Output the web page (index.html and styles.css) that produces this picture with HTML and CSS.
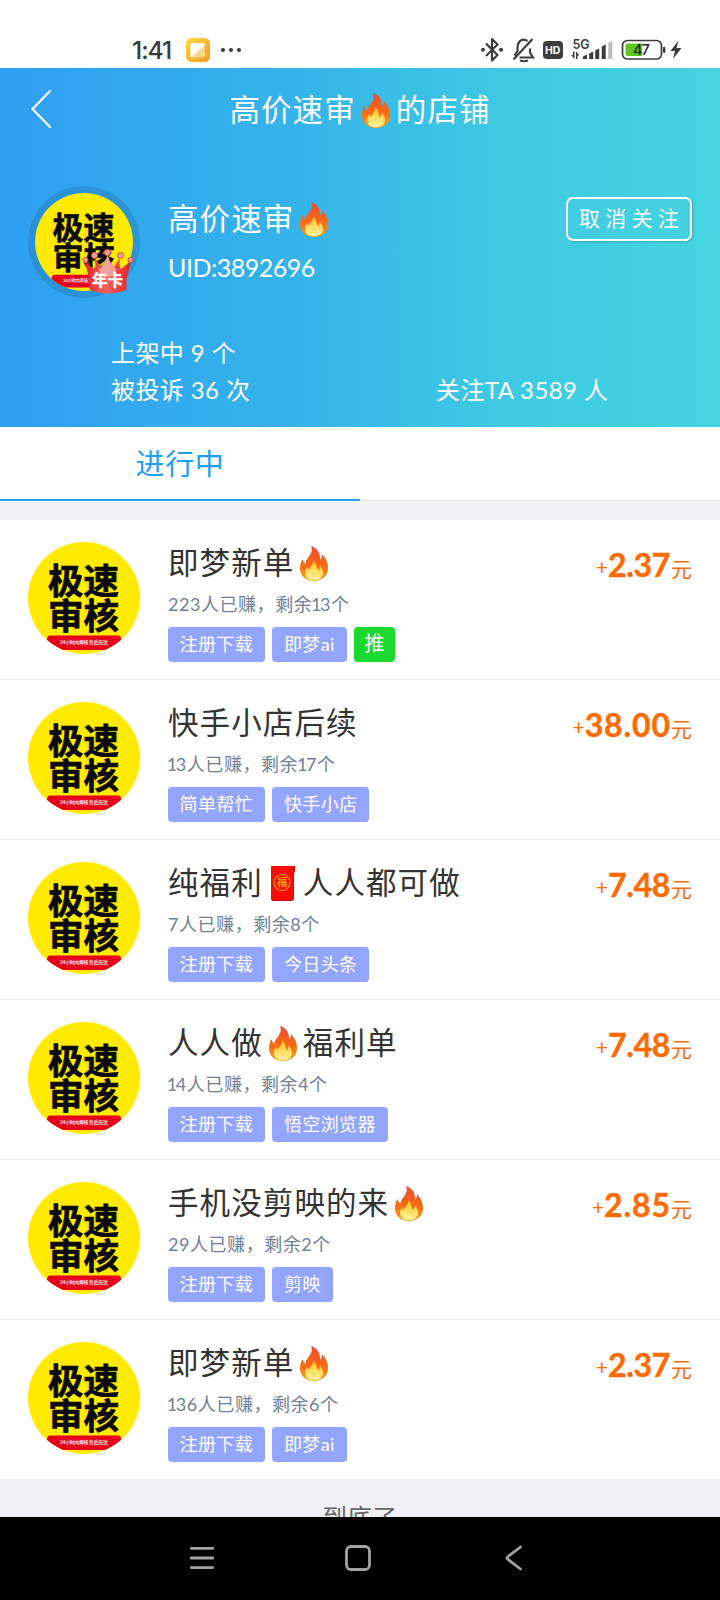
FILE: index.html
```html
<!DOCTYPE html>
<html lang="zh-CN">
<head>
<meta charset="utf-8">
<title>店铺</title>
<link rel="stylesheet" href="styles.css">
</head>
<body>
<svg class="defs" width="0" height="0">
  <defs>
    <linearGradient id="flame" x1="0" y1="0" x2="0" y2="1">
      <stop offset="0" stop-color="#ea4a30"/><stop offset=".55" stop-color="#fb6a14"/><stop offset="1" stop-color="#ffa012"/>
    </linearGradient>
    <linearGradient id="core" x1="0" y1="0" x2="0" y2="1">
      <stop offset="0" stop-color="#ffc41e"/><stop offset="1" stop-color="#fff3a0"/>
    </linearGradient>
    <linearGradient id="note" x1="0" y1="0" x2="1" y2="1">
      <stop offset="0" stop-color="#fbd83c"/><stop offset="1" stop-color="#fa9a25"/>
    </linearGradient>
    <linearGradient id="crown" x1="0" y1="0" x2="1" y2="0">
      <stop offset="0" stop-color="#e02028"/><stop offset=".45" stop-color="#f0665f"/><stop offset="1" stop-color="#e3202a"/>
    </linearGradient>
    <clipPath id="round"><circle cx="56" cy="56" r="56"/></clipPath>
    <symbol id="fire" viewBox="0 0 28 35">
      <path fill="url(#flame)" d="M11 0C17 2 20.500 6.500 20 13.500C21.500 12.500 22.300 10.500 22 8C25.800 12 28 17 28 22C28 30 22 35 14 35C6 35 0 30 0 22.500C0 19 .800 15.500 2.500 13C3 15.500 4 17 5.500 18C5 12 14.500 8.500 11 0Z"/>
      <path fill="url(#core)" d="M13 14.500C17 17 15.500 20.500 18 24C19.300 23 19.800 21.500 19.500 19.500C22 22 23 24.500 23 27C23 31.500 19.500 34.300 14 34.300C8.500 34.300 5 31.500 5 27C5 24.500 6 22.700 7.500 21.200C7.800 22.500 8.300 23.500 9.300 24C9 20.500 14 19 13 14.500Z"/>
    </symbol>
    <symbol id="avatar" viewBox="0 0 112 112">
      <g clip-path="url(#round)">
        <rect width="112" height="112" fill="#ffea00"/>
        <g class="logo-text">
          <text x="20" y="52">极速</text>
          <text x="20" y="87">审核</text>
        </g>
        <path fill="#e6001c" d="M19 108V97q0-3.500 3.500-3.500H89.500q3.500 0 3.500 3.500V108Z"/>
        <text class="logo-note" x="32" y="102" textLength="48">24小时内审核 售后无忧</text>
      </g>
    </symbol>
  </defs>
</svg>

<div class="status">
  <span class="clock">1:41</span>
  <svg class="app" width="24" height="24" viewBox="0 0 24 24">
    <rect width="24" height="24" rx="5.500" fill="url(#note)"/>
    <rect x="4.500" y="5" width="14.500" height="14.500" rx="1.500" fill="#fff" opacity=".45"/>
    <path fill="#fff" d="M6 5h11.500q1.500 0 1.500 1.500L5.500 19.500Q4.500 19.500 4.500 18V6.500Q4.500 5 6 5Z"/>
  </svg>
  <svg class="dots" width="22" height="6" viewBox="0 0 22 6" fill="#3a3a3a"><circle cx="3" cy="3" r="2"/><circle cx="11" cy="3" r="2"/><circle cx="19" cy="3" r="2"/></svg>
  <svg class="signals" width="206" height="28" viewBox="0 0 206 28" fill="none" stroke="#3c3c3c">
    <path stroke-width="2.200" stroke-linejoin="round" d="M6 7.500L17.500 19L12 24.500V3L17.500 8.500L6 20"/>
    <g fill="#3c3c3c" stroke="none"><circle cx="3" cy="13.700" r="2"/><circle cx="21" cy="13.700" r="2"/></g>
    <path stroke-width="2.200" d="M39.500 21.500H53L50 16.500V12.500M47.500 5Q43 2 39.500 5.500Q37.500 8 37.500 12V15L34.500 19.500M33.500 23.500L52.500 3"/>
    <path stroke-width="2.200" d="M40 24.500Q44 26 48 24.500"/>
    <rect x="63" y="5" width="20" height="18" rx="4" fill="#3c3c3c" stroke="none"/>
    <g stroke="none" class="glyphs">
      <text x="65" y="17.500" class="hd">HD</text>
      <text x="92.500" y="12.500" class="net" textLength="17">5G</text>
    </g>
    <g fill="#3c3c3c" stroke="none">
      <path d="M91 19h2v-3.500h1.500V23ZM96 23V15.500L99.500 19.500h-2v3.500Z"/>
      <path d="M103 23V20.500L107 18.500V23ZM109.200 17.500l4-2v7.500h-4ZM115.200 14.500l4-2v10.500h-4ZM121.700 10.500l4-2v14.500h-4Z"/>
      <path fill="#bdbdbd" d="M128.300 6.500l4-1.500v18h-4Z"/>
    </g>
    <rect x="142.500" y="4.500" width="39" height="18.500" rx="5" stroke-width="1.700"/>
    <path d="M148 7.500h14V20h-14q-2.500 0-2.500-2.500v-7.500q0-2.500 2.500-2.500Z" fill="#5cc81c" stroke="none"/>
    <text x="153" y="19.300" class="battery">47</text>
    <path stroke-width="2.400" stroke-linecap="round" d="M184.200 12v3.800"/>
    <path fill="#3c3c3c" stroke="none" d="M198.500 4.500L190.500 15H195L193 23L201.500 12H196.500Z"/>
  </svg>
</div>

<header class="hero">
  <div class="bar">
    <svg class="back" width="22" height="40" viewBox="0 0 22 40"><path d="M20 2L2.500 20L20 38"/></svg>
    <h1 class="title light">高价速审<svg class="fire"><use href="#fire"/></svg>的店铺</h1>
  </div>
  <div class="profile">
    <div class="portrait">
      <svg width="98" height="98"><use href="#avatar"/></svg>
      <svg class="crown" width="52" height="48" viewBox="0 0 52 48">
        <path fill="url(#crown)" d="M3 12L12 20Q15 16 12.500 8L19 18Q24 12 25.500 5Q27 12 32 18L38.500 8Q36 16 39 20L49 12L44.500 30V41Q26 48 8 41L7 30Z"/>
        <path fill="#f7cfcb" opacity=".6" d="M25.500 7Q27 14 34 20L33 26Q26 30 18 26L17 20Q24 14 25.500 7Z"/>
        <g fill="#ef9b97" stroke="#d93b40" stroke-width=".800"><circle cx="3.500" cy="11" r="2.600"/><circle cx="12.500" cy="6.500" r="3"/><circle cx="25.500" cy="3.500" r="3.200"/><circle cx="38.500" cy="6.500" r="3"/><circle cx="48.500" cy="11" r="2.600"/></g>
        <text x="10" y="36.500" class="crown-text">年卡</text>
      </svg>
    </div>
    <div class="who">
      <div class="title light">高价速审<svg class="fire"><use href="#fire"/></svg></div>
      <div class="uid">UID:3892696</div>
    </div>
    <button class="follow">取消关注</button>
  </div>
  <div class="stats">
    <div class="left">上架中 9 个<br>被投诉 36 次</div>
    <div class="right">关注TA 3589 人</div>
  </div>
</header>

<nav class="tabs"><div class="tab active">进行中</div><div class="tab"></div></nav>

<main class="list">
  <article class="row">
    <svg class="pic"><use href="#avatar"/></svg>
    <div class="info">
      <h2 class="title">即梦新单<svg class="fire"><use href="#fire"/></svg></h2>
      <p class="sub">223人已赚，剩余<i>1</i>3个</p>
      <div class="tags"><span class="tag">注册下载</span><span class="tag">即梦ai</span><span class="tag push">推</span></div>
    </div>
    <div class="price"><i>+</i><b>2.37</b>元</div>
  </article>
  <article class="row">
    <svg class="pic"><use href="#avatar"/></svg>
    <div class="info">
      <h2 class="title">快手小店后续</h2>
      <p class="sub"><i>1</i>3人已赚，剩余<i>1</i>7个</p>
      <div class="tags"><span class="tag">简单帮忙</span><span class="tag">快手小店</span></div>
    </div>
    <div class="price"><i>+</i><b class="wide">38.00</b>元</div>
  </article>
  <article class="row">
    <svg class="pic"><use href="#avatar"/></svg>
    <div class="info">
      <h2 class="title">纯福利<svg class="packet" width="24" height="35" viewBox="0 0 24 35"><path fill="#b50d0d" d="M2 0H24V5L23 8V33L21 35H1Z"/><path fill="#fb0a05" d="M0 0H22.500V34H0Z"/><circle cx="11" cy="16.500" r="8" fill="none" stroke="#ff9d00" stroke-width="1.200"/><text x="5.700" y="20.300" class="luck">福</text></svg>人人都可做</h2>
      <p class="sub">7人已赚，剩余8个</p>
      <div class="tags"><span class="tag">注册下载</span><span class="tag">今日头条</span></div>
    </div>
    <div class="price"><i>+</i><b>7.48</b>元</div>
  </article>
  <article class="row">
    <svg class="pic"><use href="#avatar"/></svg>
    <div class="info">
      <h2 class="title">人人做<svg class="fire"><use href="#fire"/></svg>福利单</h2>
      <p class="sub"><i>1</i>4人已赚，剩余4个</p>
      <div class="tags"><span class="tag">注册下载</span><span class="tag">悟空浏览器</span></div>
    </div>
    <div class="price"><i>+</i><b>7.48</b>元</div>
  </article>
  <article class="row">
    <svg class="pic"><use href="#avatar"/></svg>
    <div class="info">
      <h2 class="title">手机没剪映的来<svg class="fire"><use href="#fire"/></svg></h2>
      <p class="sub">29人已赚，剩余2个</p>
      <div class="tags"><span class="tag">注册下载</span><span class="tag">剪映</span></div>
    </div>
    <div class="price"><i>+</i><b class="wide">2.85</b>元</div>
  </article>
  <article class="row">
    <svg class="pic"><use href="#avatar"/></svg>
    <div class="info">
      <h2 class="title">即梦新单<svg class="fire"><use href="#fire"/></svg></h2>
      <p class="sub"><i>1</i>36人已赚，剩余6个</p>
      <div class="tags"><span class="tag">注册下载</span><span class="tag">即梦ai</span></div>
    </div>
    <div class="price"><i>+</i><b>2.37</b>元</div>
  </article>
</main>
<div class="end">到底了</div>

<footer class="keys">
  <svg width="24" height="28" viewBox="0 0 24 28"><path d="M1.300 3.300H22.700M1.300 13H22.700M1.300 22.700H22.700"/></svg>
  <svg class="home" width="26" height="28" viewBox="0 0 26 28"><rect x="1.500" y="1.500" width="23" height="23" rx="4.500"/></svg>
  <svg width="18" height="28" viewBox="0 0 18 28"><path d="M15.500 2L2.500 12Q1.500 13 2.500 14L15.500 24"/></svg>
</footer>
</body>
</html>
```

FILE: styles.css
```css
* { box-sizing: border-box; }
body {
  margin: 0;
  width: 720px;
  height: 1600px;
  overflow: hidden;
  display: flex;
  flex-direction: column;
  background: #efeff4;
  font-family: Lato, "Noto Sans CJK SC", sans-serif;
}
h1, h2, p { margin: 0; font-weight: 400; }
.defs { position: absolute; }

/* status bar */
.status {
  flex: none;
  height: 68px;
  padding: 32px 0 0 132px;
  display: flex;
  align-items: center;
  background: #fff;
}
.status svg { flex: none; }
.clock { width: 54px; font: 500 24.5px/28px Inter, sans-serif; letter-spacing: -1px; color: #3a3a3a; }
.dots { margin-left: 10px; }
.signals { margin-left: 238px; }
.glyphs { font-family: Inter, sans-serif; font-weight: 700; }
.hd { font-size: 10.5px; fill: #fff; }
.net { font-size: 12.5px; font-weight: 600; fill: #3c3c3c; }
.battery { font: 500 14.5px Inter, sans-serif; letter-spacing: -1px; fill: #222; stroke: none; }

/* shop header */
.hero {
  flex: none;
  height: 359px;
  background: linear-gradient(90deg, #2f9ff1, #35b3e9 40%, #3fcae2 72%, #45d4e0);
  color: #fff;
}
.bar { height: 82px; display: grid; grid-template-columns: 60px 1fr 60px; align-items: center; }
.back { margin-left: 30px; fill: none; stroke: #fff; stroke-width: 2.2; stroke-linecap: round; }
.bar .title { text-align: center; }
.title {
  font-size: 30.5px;
  line-height: 44px;
  letter-spacing: 1.1px;
  color: #333;
  white-space: nowrap;
}
.title.light { color: #fff; }
.fire { width: 28px; height: 35px; margin: 0 6px 0 6px; vertical-align: -7px; }
.packet { margin: 0 8px 0 8px; vertical-align: -7px; }
.luck { font-size: 10.5px; font-weight: 700; fill: #ff9d00; letter-spacing: 0; }
.profile { display: flex; padding: 36px 28px 0; height: 185px; }
.portrait {
  position: relative;
  width: 112px;
  height: 112px;
  padding: 7px;
  border-radius: 50%;
  background: rgba(35, 120, 180, .4);
}
.crown { position: absolute; left: 54px; top: 63px; }
.crown-text { font-size: 15.5px; font-weight: 700; fill: #fff; stroke: #fff; stroke-width: .4px; }
.logo-text { font-size: 35.5px; font-weight: 700; fill: #0b0b0b; stroke: #0b0b0b; stroke-width: .7px; }
.logo-note { font-size: 5px; font-weight: 500; fill: #fff; }
.who { padding: 10px 0 0 28px; flex: 1; }
.uid { margin-top: 9px; font-size: 25px; line-height: 36px; letter-spacing: -.5px; }
.follow {
  width: 126px;
  height: 44px;
  margin-top: 11px;
  padding: 0 0 5px 5px;
  border: 2px solid #fff;
  border-radius: 7px;
  background: none;
  box-shadow: 1px 1px 2px rgba(0, 0, 0, .2);
  color: #fff;
  font: 21px "Noto Sans CJK SC", sans-serif;
  letter-spacing: 5.2px;
  white-space: nowrap;
}
.stats {
  display: flex;
  align-items: flex-end;
  padding-left: 111px;
  font-size: 24px;
  line-height: 36.5px;
  letter-spacing: .4px;
}
.left { width: 325px; }

/* tabs */
.tabs { flex: none; display: flex; height: 75px; background: #fff; margin-bottom: 18px; }
.tab { flex: 1; border-bottom: 1px solid #e0e0e0; margin-bottom: 1px; }
.active {
  margin: 0 0 1px;
  border-bottom: 2px solid #2f9ff0;
  color: #1e9ff5;
  text-align: center;
  font-size: 29px;
  line-height: 73px;
  letter-spacing: .7px;
}

/* tasks */
.row {
  display: flex;
  height: 160px;
  padding: 22px 28px 0;
  background: #fff;
  border-bottom: 1px solid #ececec;
}
.row:last-child { border: 0; height: 159px; }
.pic { flex: none; width: 112px; height: 112px; }
.info { flex: 1; padding-left: 28px; }
.row .title { margin-top: -2px; }
.sub { margin-top: 5px; font-size: 18px; line-height: 30px; letter-spacing: .55px; color: #6f8097; }
.sub i { font-style: normal; margin: 0 -2px 0 -1.2px; }
.tags { display: flex; gap: 7.5px; margin-top: 8px; }
.tag {
  height: 35px;
  padding: 0 11.8px 0 11.5px;
  border-radius: 4px;
  background: #93a5ff;
  color: #fff;
  font-size: 18px;
  line-height: 34px;
  letter-spacing: .4px;
  white-space: nowrap;
}
.push { padding: 0 10.3px; background: #1cd92f; font-size: 20px; line-height: 33px; }
.price { padding-top: 1px; color: #ff6b00; font-size: 21px; line-height: 44px; white-space: nowrap; }
.price b { font-size: 32px; font-weight: 700; margin-right: 1px; letter-spacing: -.3px; -webkit-text-stroke: .4px #ff6b00; }
.price .wide { letter-spacing: .9px; margin-right: 0; }
.price i { font-style: normal; font-size: 21px; position: relative; top: -2px; }
.end { flex: 1; padding-top: 20px; text-align: center; font-size: 24.5px; line-height: 38px; letter-spacing: .5px; color: #666; min-height: 0; overflow: hidden; }

/* system keys */
.keys {
  flex: none;
  height: 83px;
  padding: 0 197px 0 190px;
  display: flex;
  align-items: center;
  justify-content: space-between;
  background: #000;
  fill: none;
  stroke: #a3a3a3;
  stroke-width: 2.8;
  stroke-linecap: round;
}
.home { margin-right: 4px; }
```
